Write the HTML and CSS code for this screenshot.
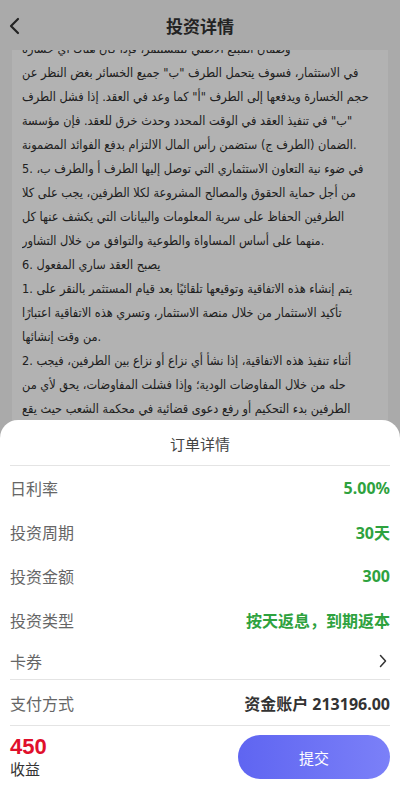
FILE: index.html
```html
<!DOCTYPE html>
<html lang="zh">
<head>
<meta charset="utf-8">
<title>投资详情</title>
<link rel="stylesheet" href="styles.css">
</head>
<body>
<div class="page">
  <header class="header">
    <svg class="back" width="14" height="18" viewBox="0 0 14 18"><path d="M11 2 L4 9 L11 16" fill="none" stroke="#333" stroke-width="2.2" stroke-linecap="round" stroke-linejoin="round"/></svg>
    <h1 class="title">投资详情</h1>
  </header>
  <main class="card">
    <div class="text">
      <div class="ln ln-cut">وضمان المبلغ الأصلي للمستثمر، فإذا كان هناك أي خسارة</div>
      <div class="ln">في الاستثمار، فسوف يتحمل الطرف "ب" جميع الخسائر بغض النظر عن</div>
      <div class="ln">حجم الخسارة ويدفعها إلى الطرف "أ" كما وعد في العقد. إذا فشل الطرف</div>
      <div class="ln">&#x200F;"ب" في تنفيذ العقد في الوقت المحدد وحدث خرق للعقد. فإن مؤسسة</div>
      <div class="ln">الضمان (الطرف ج) ستضمن رأس المال الالتزام بدفع الفوائد المضمونة.</div>
      <div class="ln">5. في ضوء نية التعاون الاستثماري التي توصل إليها الطرف أ والطرف ب،&#x200F;</div>
      <div class="ln">من أجل حماية الحقوق والمصالح المشروعة لكلا الطرفين، يجب على كلا</div>
      <div class="ln">الطرفين الحفاظ على سرية المعلومات والبيانات التي يكشف عنها كل</div>
      <div class="ln">منهما على أساس المساواة والطوعية والتوافق من خلال التشاور.</div>
      <div class="ln">6. يصبح العقد ساري المفعول</div>
      <div class="ln">1. يتم إنشاء هذه الاتفاقية وتوقيعها تلقائيًا بعد قيام المستثمر بالنقر على</div>
      <div class="ln">تأكيد الاستثمار من خلال منصة الاستثمار، وتسري هذه الاتفاقية اعتبارًا</div>
      <div class="ln">من وقت إنشائها.</div>
      <div class="ln">2. أثناء تنفيذ هذه الاتفاقية، إذا نشأ أي نزاع أو نزاع بين الطرفين، فيجب</div>
      <div class="ln">حله من خلال المفاوضات الودية؛ وإذا فشلت المفاوضات، يحق لأي من</div>
      <div class="ln">الطرفين بدء التحكيم أو رفع دعوى قضائية في محكمة الشعب حيث يقع</div>
      <div class="ln">الطرف أ.</div>
    </div>
  </main>
</div>
<div class="mask"></div>
<section class="sheet">
  <div class="sheet-title">订单详情</div>
  <div class="rows">
    <div class="row"><span class="label">日利率</span><span class="val green">5.00%</span></div>
    <div class="row"><span class="label">投资周期</span><span class="val green">30天</span></div>
    <div class="row"><span class="label">投资金额</span><span class="val green">300</span></div>
    <div class="row"><span class="label">投资类型</span><span class="val green">按天返息，到期返本</span></div>
    <div class="row row-coupon"><span class="label">卡券</span>
      <svg class="chev" width="8" height="14" viewBox="0 0 8 14"><path d="M1.5 1.5 L6.5 7 L1.5 12.5" fill="none" stroke="#333" stroke-width="1.5" stroke-linecap="round" stroke-linejoin="round"/></svg>
    </div>
  </div>
  <div class="row row-pay"><span class="label">支付方式</span><span class="val dark">资金账户 213196.00</span></div>
  <div class="footer">
    <div class="income">
      <div class="amount">450</div>
      <div class="income-label">收益</div>
    </div>
    <button class="submit">提交</button>
  </div>
</section>
</body>
</html>
```
FILE: styles.css
```css
* { box-sizing: border-box; }
html, body {
  margin: 0;
  padding: 0;
}
body {
  width: 400px;
  height: 799px;
  overflow: hidden;
  background: #f4f4f4;
  font-family: "Noto Sans", "Noto Sans CJK SC", sans-serif;
  color: #333;
}
.page {
  height: 799px;
  display: flex;
  flex-direction: column;
}
.header {
  height: 50px;
  flex: none;
  display: flex;
  align-items: center;
  justify-content: center;
  position: relative;
}
.back {
  position: absolute;
  left: 7px;
  top: 17px;
}
.title {
  margin: 0;
  font-size: 17px;
  font-weight: 700;
  color: #333;
  font-family: "Noto Sans CJK SC", sans-serif;
}
.card {
  flex: 1;
  margin: 0 12px;
  background: #fff;
  overflow: hidden;
  padding: 0 10px;
}
.text {
  margin-top: -13px;
  font-family: "DejaVu Sans Condensed", "DejaVu Sans", sans-serif;
  font-stretch: condensed;
  font-size: 12.6px;
  line-height: 24px;
  color: #2e2e2e;
}
.ln {
  white-space: nowrap;
  text-align: left;
  overflow: hidden;
}
.mask {
  position: fixed;
  inset: 0;
  background: rgba(0, 0, 0, 0.3);
}
.sheet {
  position: fixed;
  left: 0;
  right: 0;
  bottom: 0;
  height: 379px;
  background: #fff;
  border-radius: 18px 18px 0 0;
  padding: 0 10px;
  font-family: "Noto Sans", "Noto Sans CJK SC", sans-serif;
}
.sheet-title {
  height: 46px;
  display: flex;
  align-items: center;
  justify-content: center;
  font-size: 15px;
  color: #444;
  font-family: "Noto Sans CJK SC", sans-serif;
  border-bottom: 1px solid #e4e4e4;
  padding-top: 1px;
}
.rows {
  border-bottom: 1px solid #e4e4e4;
}
.row {
  height: 44px;
  display: flex;
  align-items: center;
  justify-content: space-between;
}
.row-coupon {
  height: 37px;
}
.row-pay {
  height: 46px;
  border-bottom: 1px solid #e4e4e4;
}
.label {
  font-size: 16px;
  color: #666;
  font-family: "Noto Sans CJK SC", sans-serif;
}
.val {
  font-size: 16px;
  font-weight: 700;
}
.green { color: #2ea23e; }
.dark { color: #333; }
.chev { margin-right: 3px; }
.footer {
  height: 72px;
  display: flex;
  align-items: flex-start;
  justify-content: space-between;
  padding-top: 9px;
}
.income {
  display: flex;
  flex-direction: column;
}
.amount {
  font-family: "Liberation Sans", "Noto Sans", sans-serif;
  font-size: 22px;
  font-weight: 700;
  color: #e0102c;
  line-height: 24px;
}
.income-label {
  font-size: 15px;
  line-height: 19px;
  color: #333;
  font-family: "Noto Sans CJK SC", sans-serif;
}
.submit {
  width: 152px;
  height: 44px;
  border: 0;
  border-radius: 22px;
  background: linear-gradient(90deg, #5f65f1, #7b80f8);
  color: #fff;
  font-size: 15px;
  font-family: "Noto Sans CJK SC", sans-serif;
  padding: 0;
}
```
